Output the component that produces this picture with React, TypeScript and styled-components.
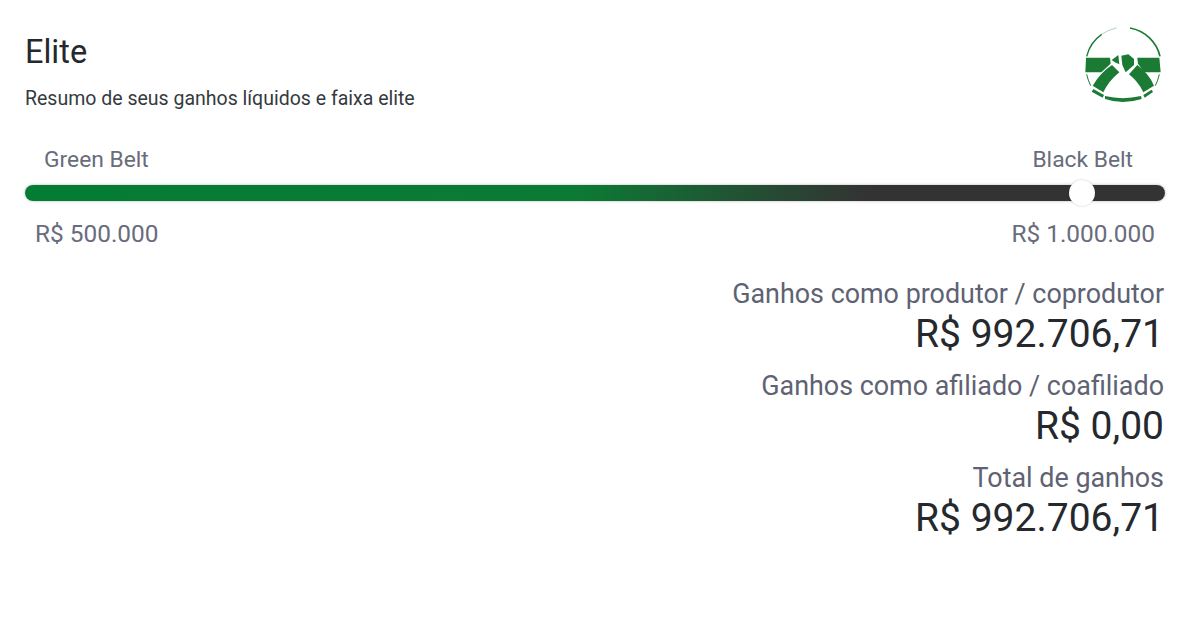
import React from "react";
import styled, { createGlobalStyle } from "styled-components";

const GlobalStyle = createGlobalStyle`
	html, body {
		margin: 0;
		padding: 0;
		background: #fff;
	}
	body {
		font-family: Roboto, "Liberation Sans", sans-serif;
	}
`;

const earnings = [
	{ label: "Ganhos como produtor / coprodutor", value: "R$ 992.706,71" },
	{ label: "Ganhos como afiliado / coafiliado", value: "R$ 0,00" },
	{ label: "Total de ganhos", value: "R$ 992.706,71" },
];

const BeltLogo = () => (
	<Logo width="80" height="80" viewBox="69 30 240 240">
		<g fill="#1b7a34">
			<path d="M78 128 L150 128 L152 146 L124 172 L76 172 Z" />
			<path d="M232 128 L298 128 L302 172 L252 172 L234 146 Z" />
			<path d="M184 122 L205 118 L222 132 L222 150 L197 172 L187 150 Z" />
			<path d="M155 135 L175 120 L178 148 L165 142 Z" />
			<path d="M156 150 Q122 172 98 212 L130 232 Q146 198 178 172 Z" />
			<path d="M232 150 Q266 175 282 212 L250 232 Q235 200 207 178 Z" />
			<path d="M100 222 L132 240 L128 248 L95 230 Z" />
			<path d="M250 240 L275 224 L279 231 L254 248 Z" />
			<path d="M135 243 Q188 256 243 243 L245 252 Q188 270 135 252 Z" />
		</g>
		<g fill="none" stroke="#1b7a34">
			<path d="M80 124 A113 113 0 0 1 125 58" strokeWidth="4" />
			<path d="M125 58 A113 113 0 0 1 170 39" strokeWidth="2" opacity="0.5" />
			<path d="M210 39 A113 113 0 0 1 300 124" strokeWidth="5" />
			<path d="M80 178 Q84 196 92 212" strokeWidth="3" />
			<path d="M298 178 Q294 196 286 212" strokeWidth="3" />
		</g>
	</Logo>
);

const App = () => (
	<>
		<GlobalStyle />
		<Page>
			<Header>
				<div>
					<Title>Elite</Title>
					<Subtitle>Resumo de seus ganhos líquidos e faixa elite</Subtitle>
				</div>
				<BeltLogo />
			</Header>
			<BeltRow>
				<BeltName>Green Belt</BeltName>
				<BeltName>Black Belt</BeltName>
			</BeltRow>
			<Track>
				<Thumb />
			</Track>
			<GoalRow>
				<Goal>R$ 500.000</Goal>
				<Goal>R$ 1.000.000</Goal>
			</GoalRow>
			<Earnings>
				{earnings.map((item) => (
					<Earning key={item.label}>
						<EarningLabel>{item.label}</EarningLabel>
						<EarningValue>{item.value}</EarningValue>
					</Earning>
				))}
			</Earnings>
		</Page>
	</>
);

const Page = styled.main`
	width: 1200px;
	height: 625px;
	box-sizing: border-box;
	padding: 25px 35px 0 25px;
	overflow: hidden;
`;

const Header = styled.header`
	display: flex;
	justify-content: space-between;
	align-items: flex-start;
	height: 120px;
`;

const Logo = styled.svg`
	margin-right: 2px;
`;

const Title = styled.h1`
	margin: 9px 0 0;
	font-size: 32.5px;
	line-height: 36px;
	font-weight: 400;
	color: #25292d;
`;

const Subtitle = styled.p`
	margin: 17px 0 0;
	font-size: 19.5px;
	line-height: 24px;
	color: #343a40;
`;

const BeltRow = styled.div`
	display: flex;
	justify-content: space-between;
	box-sizing: border-box;
	padding: 1px 32px 0 19px;
	height: 40px;
`;

const BeltName = styled.span`
	font-size: 22.8px;
	line-height: 28px;
	color: #686c7c;
`;

const Track = styled.div`
	position: relative;
	height: 16px;
	border-radius: 8px;
	background: linear-gradient(90deg, #047c34 0%, #0b7b34 48%, #333333 74%, #333333 100%);
	box-shadow: 0 0 3px rgba(0, 0, 0, 0.3);
`;

const Thumb = styled.div`
	position: absolute;
	left: 1044px;
	top: -5px;
	width: 26px;
	height: 26px;
	border-radius: 50%;
	background: #fff;
	box-shadow: 0 0 2px rgba(0, 0, 0, 0.25);
`;

const GoalRow = styled.div`
	display: flex;
	justify-content: space-between;
	padding: 17px 10px 0;
`;

const Goal = styled.span`
	font-size: 24.4px;
	line-height: 32px;
	color: #686c7c;
`;

const Earnings = styled.section`
	display: flex;
	flex-direction: column;
	align-items: flex-end;
	gap: 12px;
	margin-top: 28px;
	padding-right: 1px;
`;

const Earning = styled.div`
	display: flex;
	flex-direction: column;
	align-items: flex-end;
`;

const EarningLabel = styled.span`
	font-size: 26.9px;
	line-height: 32px;
	color: #5e6272;
`;

const EarningValue = styled.span`
	font-size: 39px;
	line-height: 48px;
	color: #25292d;
`;

export default App;
